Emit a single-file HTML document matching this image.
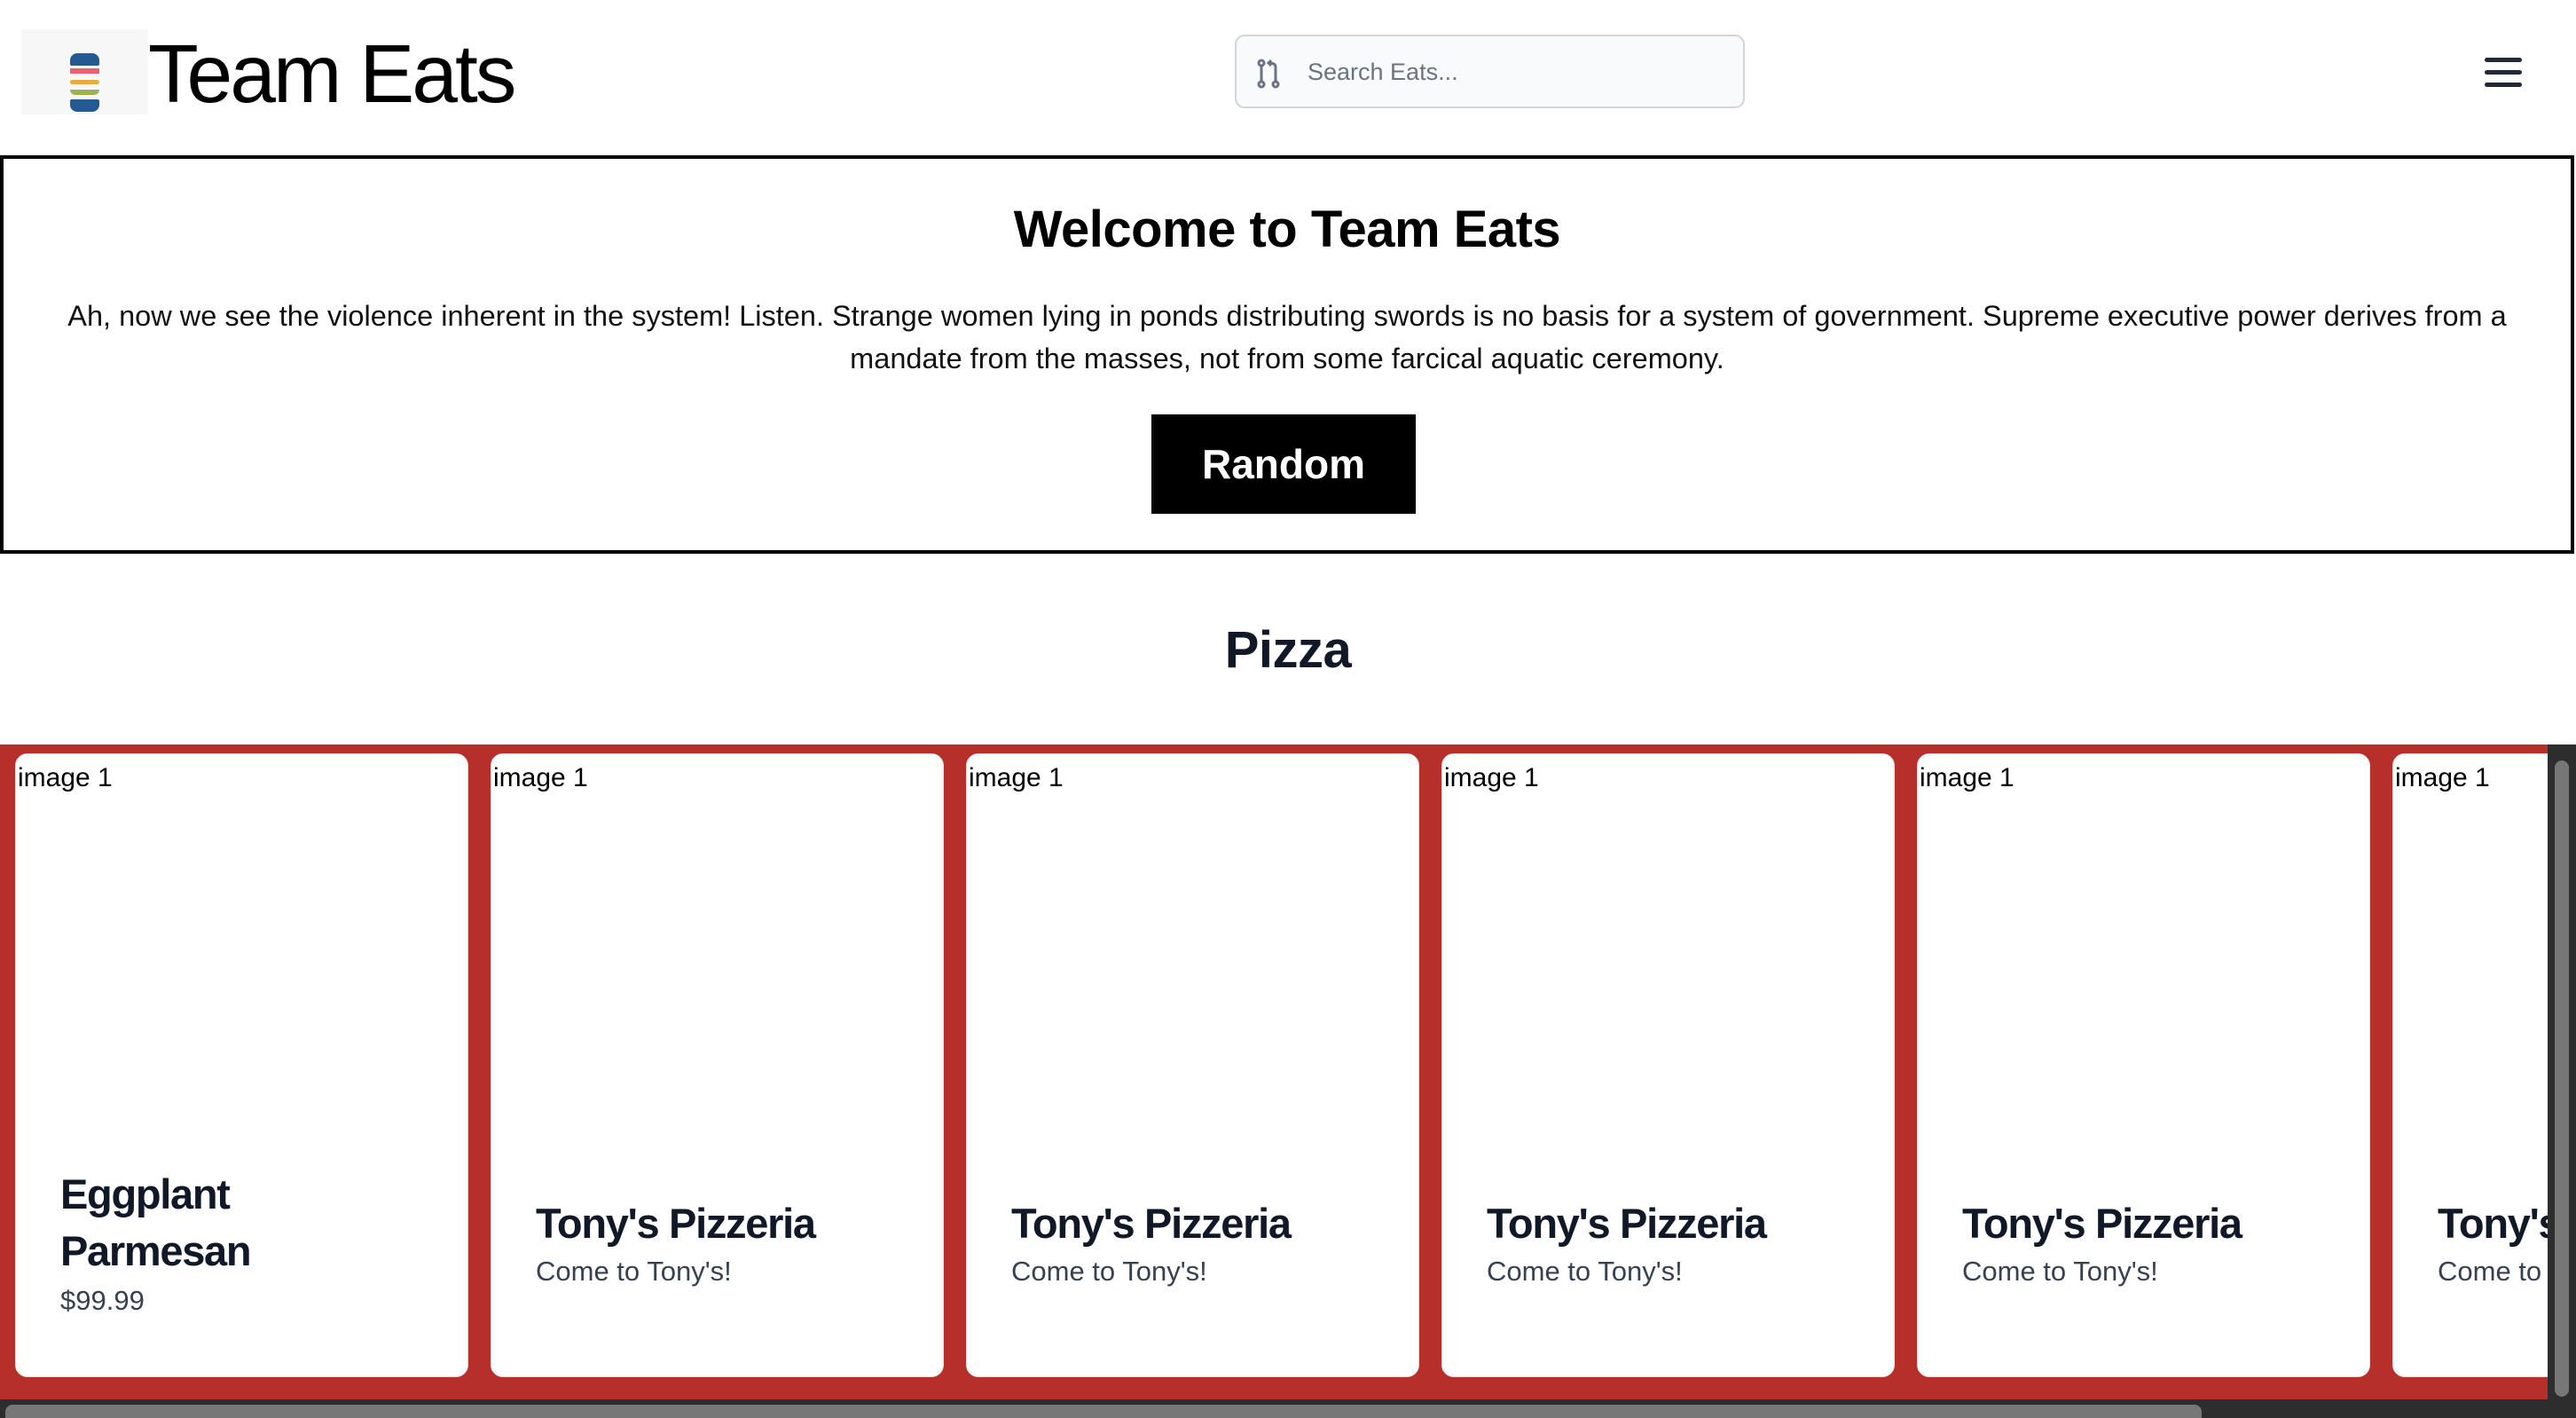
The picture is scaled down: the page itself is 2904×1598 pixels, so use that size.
<!DOCTYPE html>
<html><head><meta charset="utf-8"><style>
*{margin:0;padding:0;box-sizing:border-box}
body{width:2904px;height:1598px;overflow:hidden;background:#fff;font-family:"Liberation Sans",sans-serif;position:relative}
.abs{position:absolute}
.card{position:absolute;top:849px;width:511px;height:703px;background:#fff;border-radius:14px;border:1px solid #e5e7eb;overflow:hidden;white-space:nowrap}
.card .im{position:absolute;left:2px;top:10px;font-size:30px;color:#000}
.card h3{position:absolute;left:50px;font-size:47px;font-weight:bold;color:#111827;letter-spacing:-1.3px;line-height:64px}
.card p{position:absolute;left:50px;font-size:31px;color:#374151;line-height:40px}
</style></head><body>
<!-- header -->
<div class="abs" style="left:24px;top:33px;width:143px;height:96px;background:#f7f7f7">
 <div class="abs" style="left:55px;top:27px;width:33px;height:14px;background:#235a91;border-radius:8px 8px 2px 2px"></div>
 <div class="abs" style="left:55px;top:44px;width:33px;height:6px;background:#e8646a"></div>
 <div class="abs" style="left:55px;top:57px;width:33px;height:5px;background:#e5ac3f;border-radius:3px"></div>
 <div class="abs" style="left:55px;top:68px;width:33px;height:6px;background:#9cb54a;border-radius:0 0 8px 8px"></div>
 <div class="abs" style="left:55px;top:79px;width:33px;height:14px;background:#235a91;border-radius:2px 2px 8px 8px"></div>
</div>
<div class="abs" style="left:167px;top:28px;font-size:93px;line-height:110px;color:#000;letter-spacing:-3px">Team Eats</div>
<div class="abs" style="left:1392px;top:39px;width:575px;height:83px;background:#f9fafb;border:2px solid #d1d5db;border-radius:11px">
 <svg class="abs" style="left:22px;top:25px" width="30" height="34" viewBox="0 0 30 34" fill="none" stroke="#6b7280" stroke-width="3"><circle cx="6" cy="5" r="3"/><circle cx="6" cy="29" r="3"/><path d="M6 8v18"/><circle cx="22" cy="29" r="3"/><path d="M22 26V10c0-4-3-5-7-5"/><path d="M17 2l-3 3 3 3"/></svg>
 <div class="abs" style="left:80px;top:25px;font-size:27px;color:#6b7280">Search Eats...</div>
</div>
<div class="abs" style="left:2801px;top:65px;width:42px;height:5px;background:#1f2937;border-radius:3px"></div>
<div class="abs" style="left:2801px;top:79px;width:42px;height:5px;background:#1f2937;border-radius:3px"></div>
<div class="abs" style="left:2801px;top:93px;width:42px;height:5px;background:#1f2937;border-radius:3px"></div>
<!-- hero -->
<div class="abs" style="left:0;top:175px;width:2902px;height:449px;border:4px solid #000">
 <div class="abs" style="left:0;width:100%;top:46px;text-align:center;font-size:58px;font-weight:bold;color:#000;letter-spacing:-0.5px">Welcome to Team Eats</div>
 <div class="abs" style="left:55px;right:55px;top:153px;text-align:center;font-size:32.5px;line-height:48px;color:#111">Ah, now we see the violence inherent in the system! Listen. Strange women lying in ponds distributing swords is no basis for a system of government. Supreme executive power derives from a mandate from the masses, not from some farcical aquatic ceremony.</div>
 <div class="abs" style="left:1294px;top:288px;width:298px;height:112px;background:#000;color:#fff;font-size:46px;font-weight:bold;text-align:center;line-height:112px">Random</div>
</div>
<div class="abs" style="left:0;width:2904px;top:699px;text-align:center;font-size:58px;font-weight:bold;color:#111827;letter-spacing:-0.5px">Pizza</div>
<!-- band -->
<div class="abs" style="left:0;top:839px;width:2904px;height:738px;background:#b5302a"></div>
<div class="card" style="left:17px"><div class="im">image 1</div><h3 style="top:464px">Eggplant<br>Parmesan</h3><p style="top:596px">$99.99</p></div>
<div class="card" style="left:553px"><div class="im">image 1</div><h3 style="top:497px">Tony's Pizzeria</h3><p style="top:563px">Come to Tony's!</p></div>
<div class="card" style="left:1089px"><div class="im">image 1</div><h3 style="top:497px">Tony's Pizzeria</h3><p style="top:563px">Come to Tony's!</p></div>
<div class="card" style="left:1625px"><div class="im">image 1</div><h3 style="top:497px">Tony's Pizzeria</h3><p style="top:563px">Come to Tony's!</p></div>
<div class="card" style="left:2161px"><div class="im">image 1</div><h3 style="top:497px">Tony's Pizzeria</h3><p style="top:563px">Come to Tony's!</p></div>
<div class="card" style="left:2697px"><div class="im">image 1</div><h3 style="top:497px">Tony's Pizzeria</h3><p style="top:563px">Come to Tony's!</p></div>
<!-- scrollbars -->
<div class="abs" style="left:2872px;top:839px;width:32px;height:759px;background:#2d2d2d"></div>
<div class="abs" style="left:2880px;top:857px;width:16px;height:717px;background:#777;border-radius:8px"></div>
<div class="abs" style="left:0;top:1577px;width:2904px;height:21px;background:#2d2d2d"></div>
<div class="abs" style="left:6px;top:1583px;width:2476px;height:15px;background:#777;border-radius:8px 8px 0 0"></div>
</body></html>
